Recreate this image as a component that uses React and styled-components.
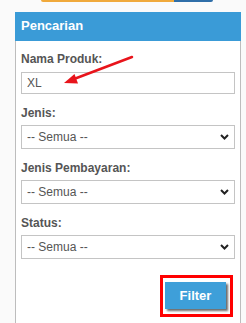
import React from 'react'
import styled, { createGlobalStyle } from 'styled-components'

const GlobalStyle = createGlobalStyle`
    html, body {
        margin: 0;
        padding: 0;
        background: #fafafa;
        font-family: "Liberation Sans", Arial, sans-serif;
    }
`

const Page = styled.div`
    height: 100vh;
    overflow: hidden;
`
const TabStrip = styled.div`
    display: flex;
    margin-left: 41px;
    width: 172px;
    height: 2px;
    border-radius: 0 0 4px 4px;
    overflow: hidden;
`
const TabSeg = styled.div`
    width: ${p => p.$w}px;
    background: ${p => p.$color};
`
const Panel = styled.div`
    margin: 10px 0 0 15px;
    width: 226px;
`
const Header = styled.div`
    height: 29px;
    line-height: 28px;
    padding-left: 6px;
    background: #3a9bd7;
    color: #fff;
    font-size: 13px;
    font-weight: bold;
`
const Body = styled.div`
    position: relative;
    box-sizing: border-box;
    height: 282px;
    padding: 11px 5px 0;
    background: #fff;
    border-left: 1px solid #bdbdbd;
    border-right: 1px solid #bdbdbd;
`
const Field = styled.div`
    margin-bottom: 12px;
`
const Label = styled.div`
    font-size: 12px;
    line-height: 14px;
    font-weight: bold;
    color: #555;
    margin-bottom: ${p => p.$gap || 5}px;
`
const TextInput = styled.input`
    display: block;
    box-sizing: border-box;
    width: 214px;
    height: 22px;
    margin: 0;
    padding: 0 5px;
    border: 1px solid #c4c4c4;
    background: #fff;
    font-family: inherit;
    font-size: 12px;
    color: #555;
    outline: none;
`
const SelectWrap = styled.div`
    position: relative;
    width: 214px;
`
const Select = styled.select`
    display: block;
    box-sizing: border-box;
    width: 100%;
    height: 24px;
    margin: 0;
    padding: 0 5px;
    border: 1px solid #c4c4c4;
    border-radius: 0;
    background: #fff;
    appearance: none;
    font-family: inherit;
    font-size: 12px;
    color: #555;
    outline: none;
`
const Chevron = styled.svg`
    position: absolute;
    right: 6px;
    top: 50%;
    margin-top: -3px;
    pointer-events: none;
`
const Actions = styled.div`
    display: flex;
    justify-content: flex-end;
    padding-right: 2px;
    margin-top: 16px;
`
const Highlight = styled.div`
    border: 3px solid #f00;
    padding: 4px 4px 5px 2px;
`
const Button = styled.button`
    display: block;
    width: 61px;
    height: 27px;
    border: none;
    background: #3e9fd9;
    color: #fff;
    font-family: inherit;
    font-size: 13px;
    font-weight: bold;
    box-shadow: 2px 2px 2px #6b6b6b;
    cursor: pointer;
`
const Arrow = styled.svg`
    position: absolute;
    left: 0;
    top: 0;
    pointer-events: none;
`

const ChoiceField = ({ label }) => (
    <Field>
        <Label>{label}</Label>
        <SelectWrap>
            <Select defaultValue="">
                <option value="">-- Semua --</option>
            </Select>
            <Chevron width="9" height="6" viewBox="0 0 9 6">
                <path d="M1 1 L4.5 4.5 L8 1" fill="none" stroke="#222" strokeWidth="2" />
            </Chevron>
        </SelectWrap>
    </Field>
)

const App = () => (
    <Page>
        <GlobalStyle />
        <TabStrip>
            <TabSeg $w={133} $color="#f0a93b" />
            <TabSeg $w={39} $color="#2f6ea8" />
        </TabStrip>
        <Panel>
            <Header>Pencarian</Header>
            <Body>
                <Field>
                    <Label $gap={6}>Nama Produk:</Label>
                    <TextInput defaultValue="XL" />
                </Field>
                <ChoiceField label="Jenis:" />
                <ChoiceField label="Jenis Pembayaran:" />
                <ChoiceField label="Status:" />
                <Actions>
                    <Highlight>
                        <Button>Filter</Button>
                    </Highlight>
                </Actions>
                {/* annotation arrow pointing at the input */}
                <Arrow width="226" height="60" viewBox="0 0 226 60">
                    <line x1="116" y1="16" x2="58" y2="38" stroke="#e8141b" strokeWidth="2.5" strokeLinecap="round" />
                    <polygon points="48,42 58.5,33 62,42.5" fill="#e8141b" />
                </Arrow>
            </Body>
        </Panel>
    </Page>
)

export default App
